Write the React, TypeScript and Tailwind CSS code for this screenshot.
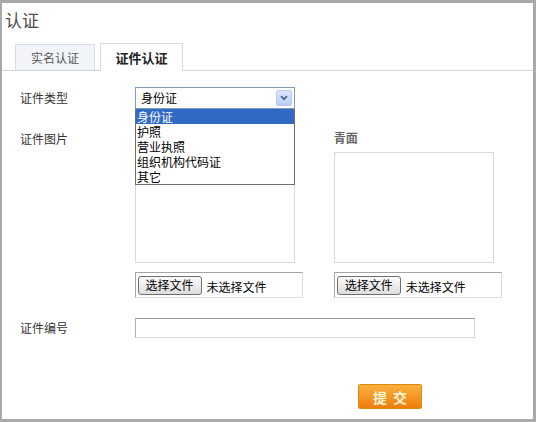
import React from 'react';

const font = { fontFamily: '"Noto Sans CJK SC", "Noto Sans", sans-serif' };

const idTypes = ['身份证', '护照', '营业执照', '组织机构代码证', '其它'];

function FilePicker() {
  return (
    <div className="w-[168px] h-[26px] border border-[#a5a5a5] border-r-[#dcdcdc] border-b-[#dcdcdc] flex items-center pl-[2px] gap-[5px]">
      <button className="h-[19px] w-[64px] rounded-[3px] border border-[#6f6f6f] bg-gradient-to-b from-[#fbfbfb] to-[#dedede] text-[12px] leading-none text-black">
        选择文件
      </button>
      <span className="text-[12px] text-black pt-[3px]">未选择文件</span>
    </div>
  );
}

function ImageSlot({ title }: { title?: string }) {
  return (
    <div className="w-[200px]">
      <div className="h-[16px] text-[12px] font-bold text-[#666] leading-[16px]">{title}</div>
      <div className="mt-[6px] w-[160px] h-[111px] border border-[#d9d9d9] bg-white" />
      <div className="mt-[9px]">
        <FilePicker />
      </div>
    </div>
  );
}

export default function App() {
  return (
    <div
      style={font}
      className="w-[536px] h-[422px] bg-white border-t-[3px] border-b-[3px] border-l-[2px] border-r-[3px] border-[#a9a9a9] text-[#333] overflow-hidden"
    >
      <div className="h-[40px] pl-[3px] pt-[7px] text-[17px] leading-[20px] text-[#4b4b4b]">认证</div>

      {/* tabs */}
      <div className="h-[28px] flex items-end gap-[5px] pl-[13px] border-b border-[#d2d2d2]">
        <div className="w-[80px] h-[26px] border border-b-0 border-[#d6dce2] bg-[#f1f5f9] flex items-center justify-center text-[12px] text-[#555]">
          实名认证
        </div>
        <div className="w-[83px] h-[28px] -mb-px border border-b-0 border-[#d6dce2] bg-white flex items-center justify-center text-[13px] font-bold text-[#222]">
          证件认证
        </div>
      </div>

      <div className="pl-[18px] pt-[16px] text-[12px] text-[#333]">
        {/* id type, list opened */}
        <div className="flex items-center">
          <div className="w-[115px]">证件类型</div>
          <div className="relative w-[160px]">
            <div className="h-[22px] border border-[#7f9db9] bg-white flex items-center pl-[5px] pr-[2px] justify-between">
              <span className="text-[12px] text-black">身份证</span>
              <span className="w-[16px] h-[16px] rounded-[2px] border border-[#b8c9ef] bg-gradient-to-b from-[#dfe8fd] to-[#b9cdf8] flex items-center justify-center">
                <svg width="8" height="6" viewBox="0 0 8 6">
                  <path d="M1 1.2 L4 4.2 L7 1.2" fill="none" stroke="#4d6185" strokeWidth="1.8" />
                </svg>
              </span>
            </div>
            <ul className="absolute left-0 top-full w-[160px] bg-white border border-t-0 border-[#6f6f6f] z-10">
              {idTypes.map((t, i) => (
                <li
                  key={t}
                  className={
                    i === 0
                      ? 'h-[15px] leading-[15px] text-[12px] bg-[#316ac5] text-white px-px'
                      : 'h-[15px] leading-[15px] text-[12px] text-black px-px'
                  }
                >
                  {t}
                </li>
              ))}
            </ul>
          </div>
        </div>

        {/* id images */}
        <div className="flex mt-[21px]">
          <div className="w-[115px] leading-[16px] pt-px">证件图片</div>
          <ImageSlot />
          <ImageSlot title="青面" />
        </div>

        {/* id number */}
        <div className="flex items-center mt-[20px]">
          <div className="w-[115px]">证件编号</div>
          <input
            type="text"
            className="w-[340px] h-[20px] border border-[#d6d6d6] border-t-[#9a9a9a] border-l-[#b0b0b0] outline-none"
          />
        </div>

        <div className="mt-[46px] ml-[338px]">
          <button className="w-[64px] h-[25px] rounded-[2px] border border-[#dc8a12] bg-gradient-to-b from-[#fbb03b] to-[#ee7d05] text-[14px] font-bold text-[#fff6dc] tracking-[6px] pl-[6px] leading-none">
            提交
          </button>
        </div>
      </div>
    </div>
  );
}
